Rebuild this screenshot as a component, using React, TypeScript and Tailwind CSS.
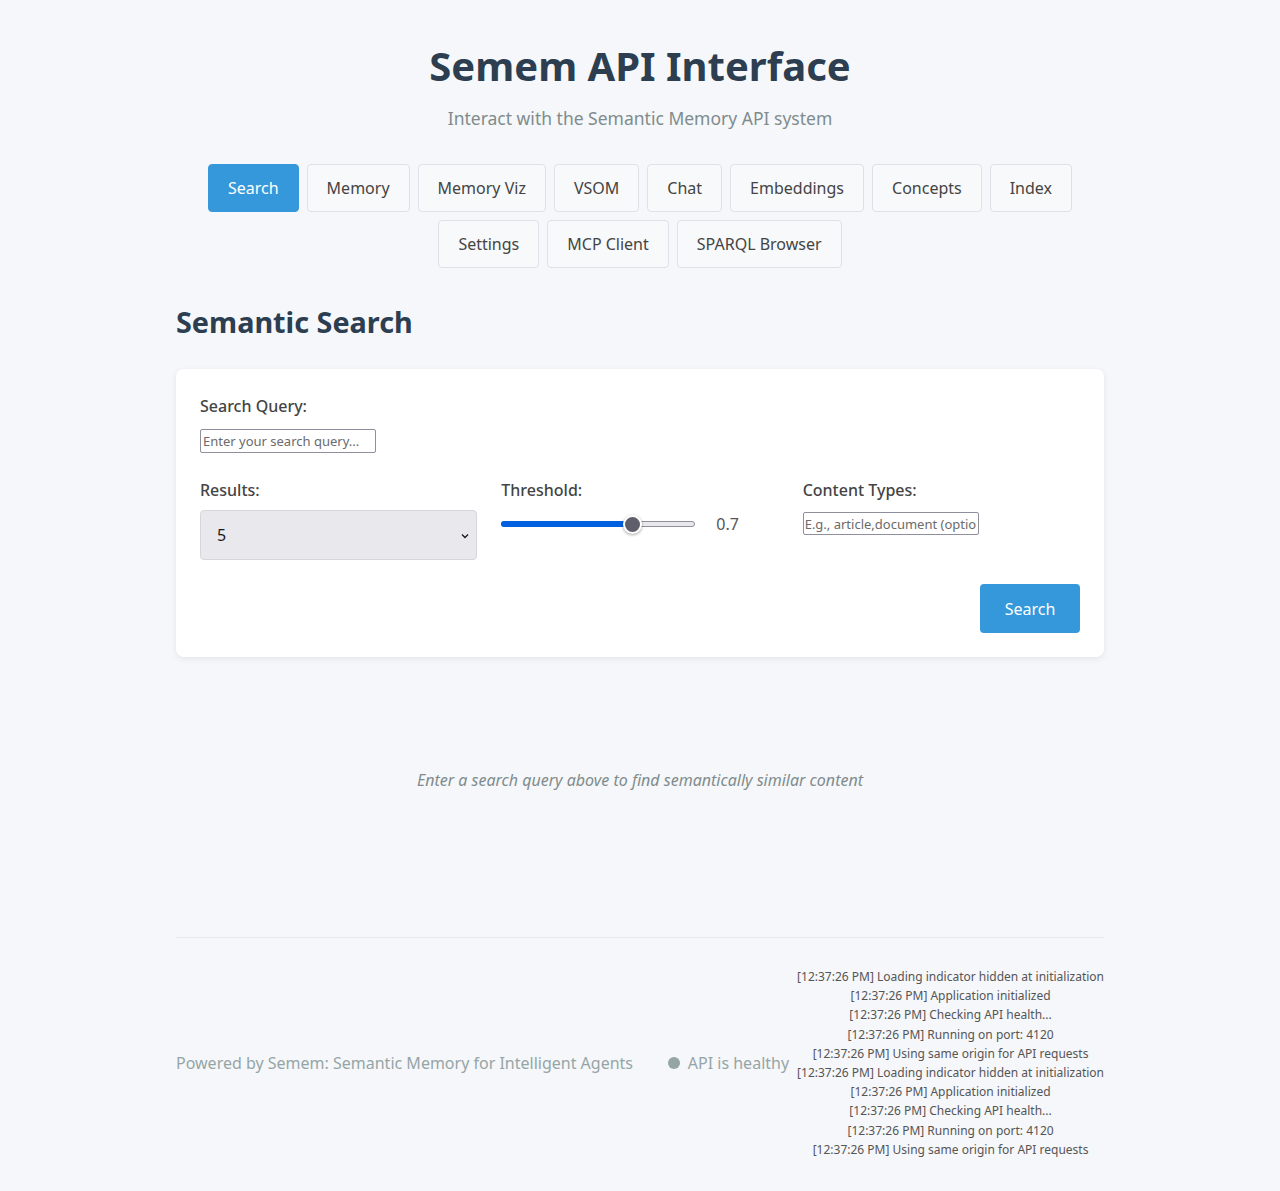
import React from "react";

const tabsTop = ["Search", "Memory", "Memory Viz", "VSOM", "Chat", "Embeddings", "Concepts", "Index"];
const tabsBottom = ["Settings", "MCP Client", "SPARQL Browser"];

const logs = [
  "[12:37:26 PM] Loading indicator hidden at initialization",
  "[12:37:26 PM] Application initialized",
  "[12:37:26 PM] Checking API health...",
  "[12:37:26 PM] Running on port: 4120",
  "[12:37:26 PM] Using same origin for API requests",
];

function Tab({ label, active }: { label: string; active?: boolean }) {
  return (
    <button
      className={
        active
          ? "h-12 px-[19px] rounded-[4px] border border-[#3498db] bg-[#3498db] text-white text-base"
          : "h-12 px-[19px] rounded-[4px] border border-[#dee2e6] bg-[#f8f9fa] text-[#444] text-base"
      }
    >
      {label}
    </button>
  );
}

export default function App() {
  return (
    <div
      className="min-h-screen bg-[#f5f7fa] text-[#333]"
      style={{ fontFamily: '"Noto Sans", "Open Sans", sans-serif' }}
    >
      <div className="max-w-[928px] mx-auto pt-[42px]">
        <header className="text-center">
          <h1 className="text-[40px] leading-[48px] font-bold text-[#2c3e50]">Semem API Interface</h1>
          <p className="mt-[15px] text-[17.5px] leading-[27px] text-[#7f8c8d]">
            Interact with the Semantic Memory API system
          </p>
        </header>

        <nav className="mt-[32px] flex flex-col items-center gap-2">
          <div className="flex gap-2">
            {tabsTop.map((t, i) => (
              <Tab key={t} label={t} active={i === 0} />
            ))}
          </div>
          <div className="flex gap-2">
            {tabsBottom.map((t) => (
              <Tab key={t} label={t} />
            ))}
          </div>
        </nav>

        <h2 className="mt-[37px] text-[28.8px] leading-[34px] font-bold text-[#2c3e50]">Semantic Search</h2>

        <div className="mt-[30px] bg-white rounded-lg shadow-[0_2px_6px_rgba(0,0,0,0.08)] p-6">
          <label className="block pt-px text-base leading-6 font-medium text-[#444]">Search Query:</label>
          <input
            className="mt-[11px] block w-[176px] h-6 border border-[#8f8f9d] rounded-[2px] px-[2px] text-[13px] placeholder:text-[#6b6b6b] bg-white"
            placeholder="Enter your search query..."
          />

          <div className="mt-[25px] grid grid-cols-3 gap-6">
            <div>
              <label className="block text-base leading-6 font-medium text-[#444]">Results:</label>
              <div className="mt-2 relative h-[50px] rounded-[4px] border border-[#d6d6dc] bg-[#e9e9ed] flex items-center px-4">
                <span className="text-base text-[#1a1a1a]">5</span>
                <svg className="absolute right-[7px] top-[22px]" width="8" height="6" viewBox="0 0 8 6">
                  <path d="M1 1.5 L4 4.5 L7 1.5" stroke="#1a1a1a" strokeWidth="1.3" fill="none" />
                </svg>
              </div>
            </div>
            <div>
              <label className="block text-base leading-6 font-medium text-[#444]">Threshold:</label>
              <div className="mt-[10px] flex items-center">
                <div className="relative w-[194px] h-6 flex items-center">
                  <div className="w-full h-[6px] rounded-full border border-[#8f8f9d] bg-[#e9e9ed]" />
                  <div className="absolute left-0 top-[9px] w-[132px] h-[6px] rounded-full bg-[#0060df]" />
                  <div className="absolute left-[122px] top-[3px] w-[19px] h-[19px] rounded-full bg-[#5f5f6b] border-2 border-white shadow-[0_1px_3px_rgba(0,0,0,0.35)]" />
                </div>
                <span className="ml-[21px] text-base text-[#555]">0.7</span>
              </div>
            </div>
            <div>
              <label className="block text-base leading-6 font-medium text-[#444]">Content Types:</label>
              <input
                className="mt-[10px] block w-[176px] h-[23px] border border-[#8f8f9d] rounded-[2px] px-[1px] text-[13px] placeholder:text-[#6b6b6b] bg-white"
                placeholder="E.g., article,document (optional)"
              />
            </div>
          </div>

          <div className="mt-6 flex justify-end">
            <button className="w-[100px] h-[49px] rounded-[4px] bg-[#3498db] text-white text-base">Search</button>
          </div>
        </div>

        <p className="mt-[111px] text-center italic text-base leading-6 text-[#7f8c8d]">
          Enter a search query above to find semantically similar content
        </p>

        <footer className="mt-[145px] border-t border-[#e6e9ee] pt-[29px] pb-[30px] flex items-center justify-between">
          <span className="text-base text-[#95a5a6]">Powered by Semem: Semantic Memory for Intelligent Agents</span>
          <div className="flex items-center gap-2">
            <div className="flex items-center gap-2 text-base text-[#95a5a6]">
              <span className="w-[12px] h-[12px] rounded-full bg-[#95a5a6]" />
              <span>API is healthy</span>
            </div>
            <div className="text-center text-xs leading-[19.2px] text-[#555]">
              {[...logs, ...logs].map((l, i) => (
                <div key={i}>{l}</div>
              ))}
            </div>
          </div>
        </footer>
      </div>
    </div>
  );
}
